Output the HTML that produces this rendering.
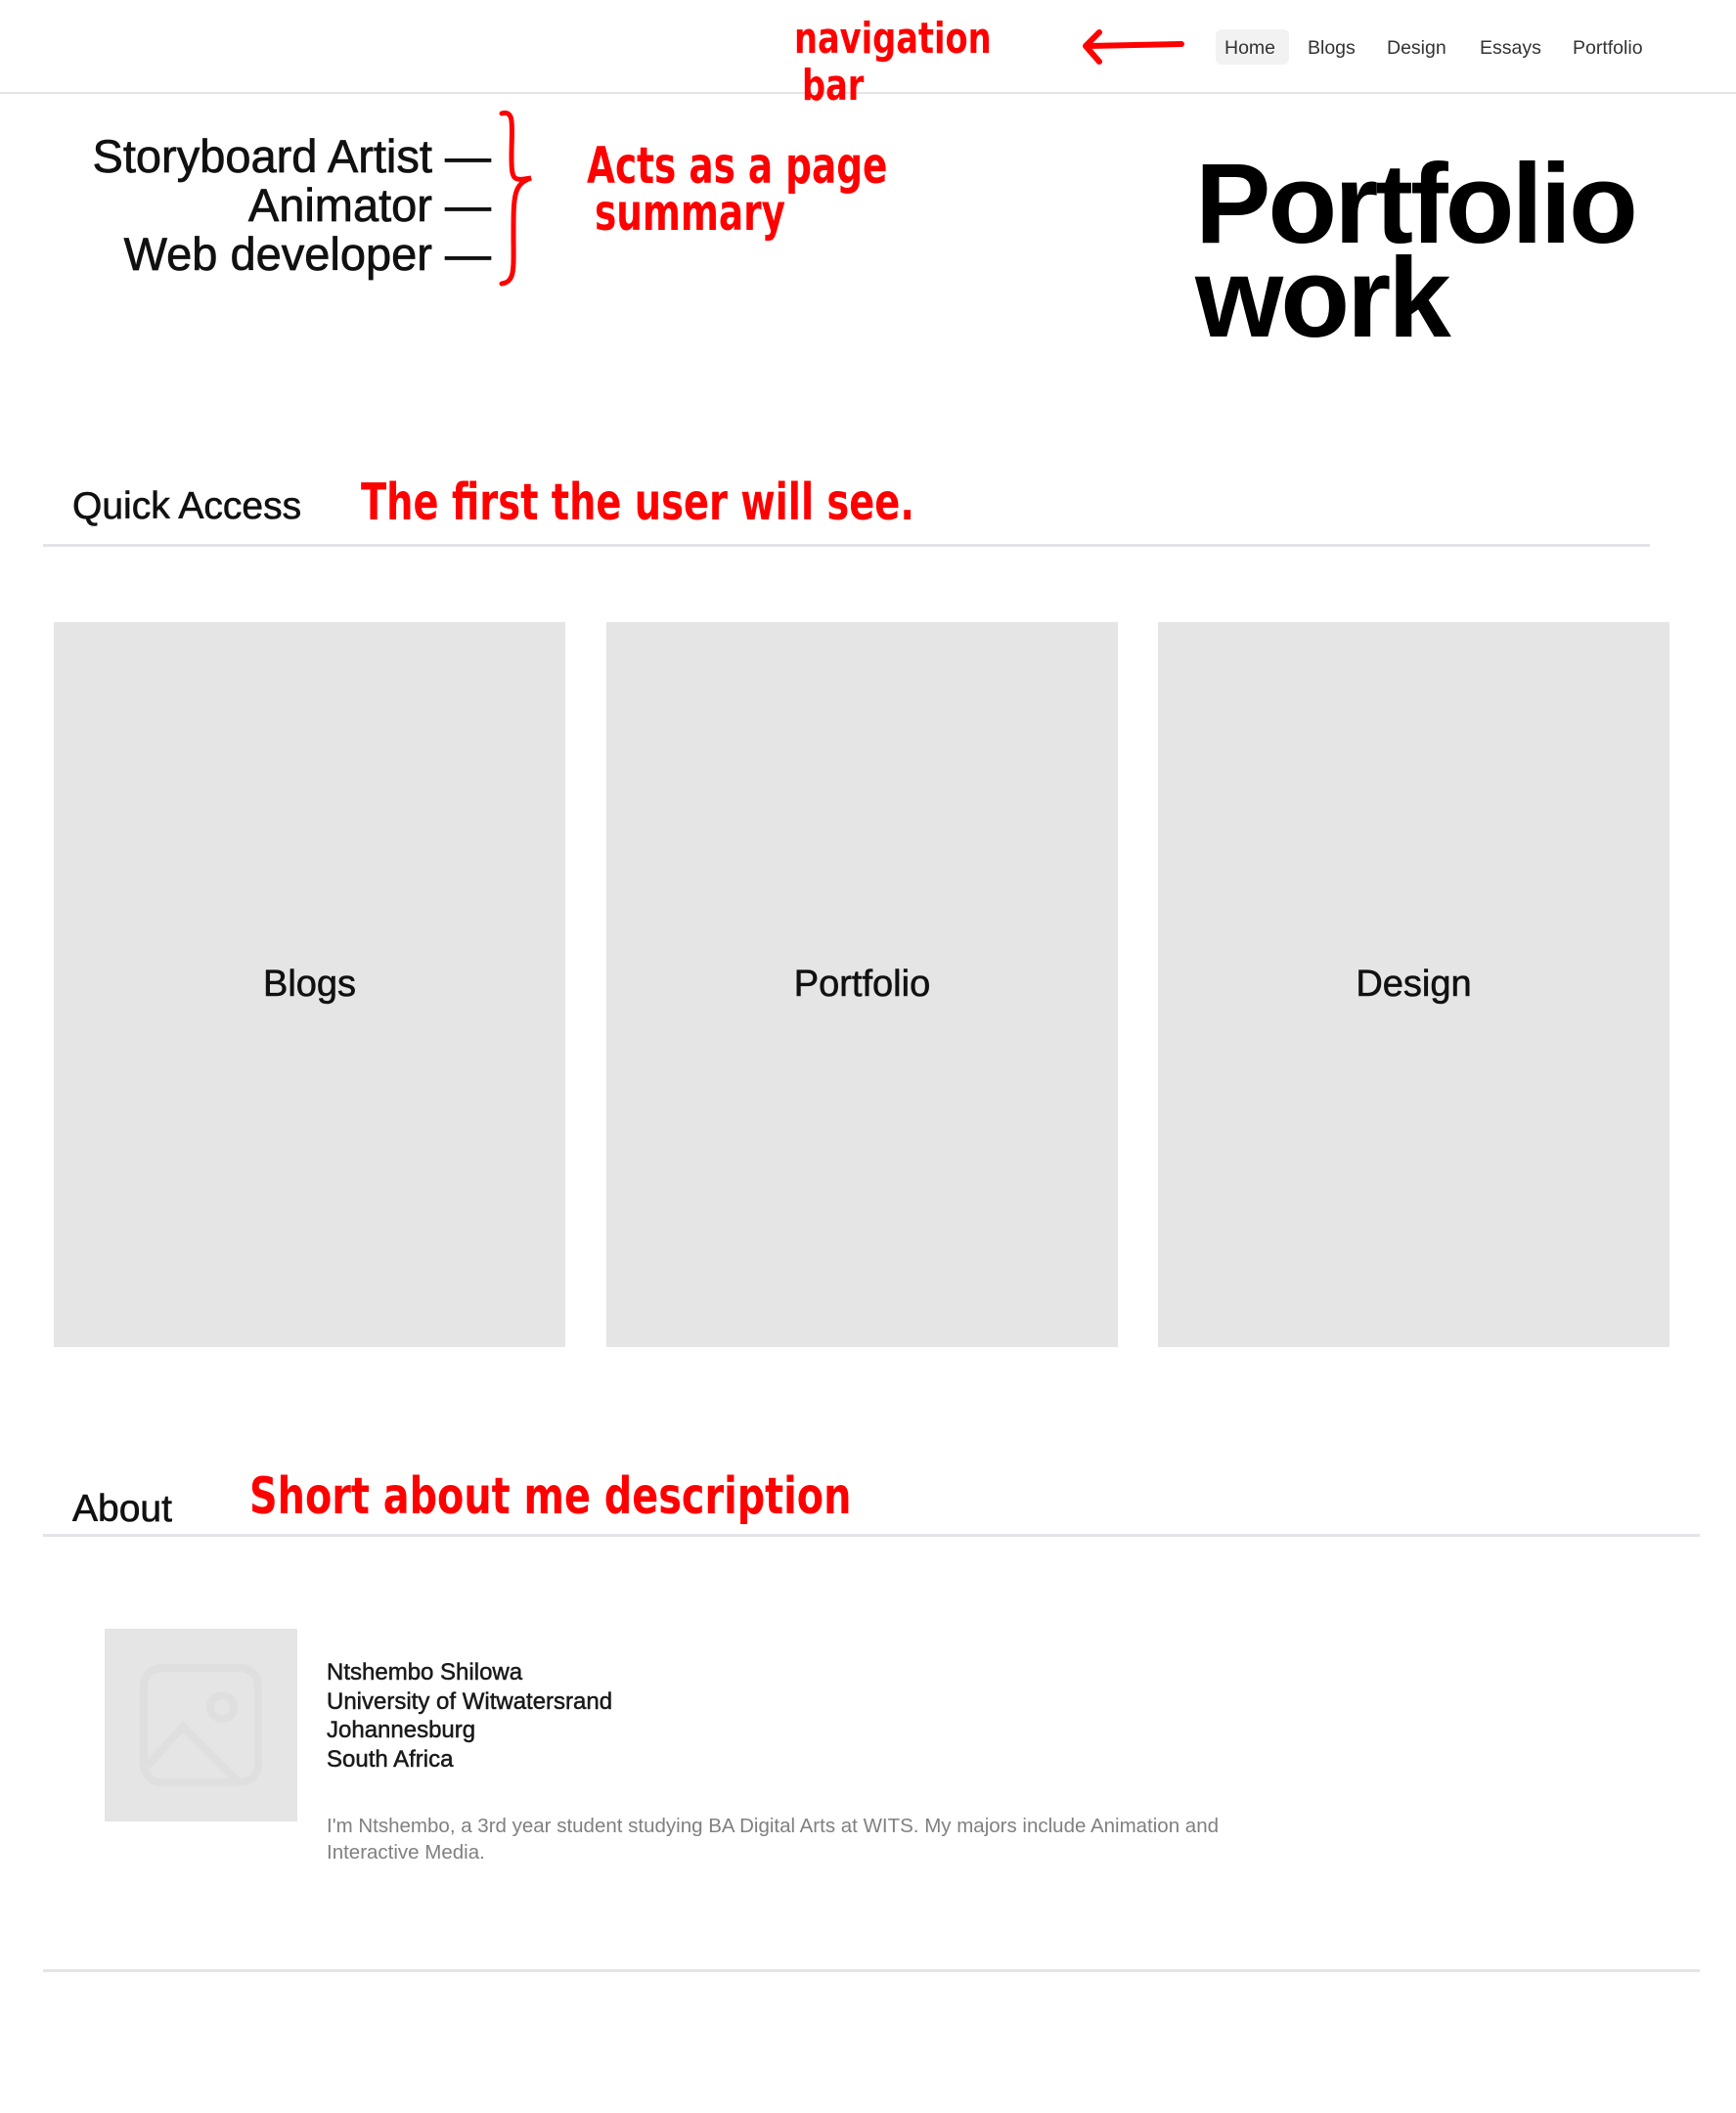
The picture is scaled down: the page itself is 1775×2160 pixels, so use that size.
<!DOCTYPE html>
<html><head><meta charset="utf-8"><style>
body{margin:0;width:1775px;height:2160px;background:#fff;position:relative;overflow:hidden;font-family:"Liberation Sans",sans-serif;color:#111}
.a{position:absolute;white-space:nowrap}
.nav{font-size:19.5px;color:#333;top:38px}
.red{color:#f00;font-family:"DejaVu Sans Condensed","DejaVu Sans",sans-serif;font-weight:bold;transform-origin:left top}
.hr{position:absolute;height:3px;background:#e4e4e8}
.card{position:absolute;top:636px;width:523px;height:741px;background:#e5e5e5;display:flex;align-items:center;justify-content:center;font-size:38px;color:#111;-webkit-text-stroke:0.6px #111}
</style></head><body>
<div class="a" style="left:1243px;top:30px;width:75px;height:36px;background:#f2f2f2;border-radius:6px"></div>
<div class="a nav" style="left:1252px">Home</div>
<div class="a nav" style="left:1337px">Blogs</div>
<div class="a nav" style="left:1418px">Design</div>
<div class="a nav" style="left:1513px">Essays</div>
<div class="a nav" style="left:1608px">Portfolio</div>
<div class="hr" style="left:0;width:1775px;top:94px;height:2px"></div>

<div class="a red" style="left:812px;top:14px;font-size:44px;transform:scaleX(0.85)">navigation</div>
<div class="a red" style="left:820px;top:62px;font-size:44px;transform:scaleX(0.85)">bar</div>
<svg class="a" style="left:1100px;top:25px" width="115" height="45"><path d="M108 20 L12 22 M24 8 L10 22 L24 38" stroke="#f00" stroke-width="6" fill="none" stroke-linecap="round" stroke-linejoin="round"/></svg>

<div class="a" style="left:0;width:502px;top:135px;text-align:right;font-size:47px;line-height:50px;color:#111;-webkit-text-stroke:0.7px #111">Storyboard Artist —<br>Animator —<br>Web developer —</div>
<svg class="a" style="left:505px;top:110px" width="60" height="185"><path d="M8 6 C22 2 18 20 18 50 C18 75 20 75 38 72 C20 78 20 90 20 130 C20 165 22 178 8 180" stroke="#f00" stroke-width="5" fill="none" stroke-linecap="round"/></svg>
<div class="a red" style="left:600px;top:140px;font-size:52px;transform:scaleX(0.8)">Acts as a page</div>
<div class="a red" style="left:608px;top:188px;font-size:52px;transform:scaleX(0.8)">summary</div>

<div class="a" style="left:1222px;top:160px;font-size:116px;line-height:96px;font-weight:bold;letter-spacing:-3px;color:#000">Portfolio<br>work</div>

<div class="a" style="left:74px;top:496px;font-size:39px;color:#111;-webkit-text-stroke:0.6px #111">Quick Access</div>
<div class="a red" style="left:369px;top:484px;font-size:52px;transform:scaleX(0.82)">The first the user will see.</div>
<div class="hr" style="left:44px;width:1643px;top:556px"></div>

<div class="card" style="left:55px">Blogs</div>
<div class="card" style="left:620px">Portfolio</div>
<div class="card" style="left:1184px">Design</div>

<div class="a" style="left:74px;top:1521px;font-size:39px;color:#111;-webkit-text-stroke:0.6px #111">About</div>
<div class="a red" style="left:255px;top:1500px;font-size:52px;transform:scaleX(0.85)">Short about me description</div>
<div class="hr" style="left:44px;width:1694px;top:1568px"></div>

<div class="a" style="left:107px;top:1665px;width:197px;height:197px;background:#e5e5e5"></div>
<svg class="a" style="left:107px;top:1665px" width="197" height="197"><rect x="40" y="40" width="117" height="117" rx="18" fill="none" stroke="#dfdfdf" stroke-width="8"/><circle cx="120" cy="80" r="12" fill="none" stroke="#dfdfdf" stroke-width="8"/><path d="M44 140 L80 100 L135 155" fill="none" stroke="#dfdfdf" stroke-width="8"/></svg>
<div class="a" style="left:334px;top:1695px;font-size:24px;line-height:29.6px;color:#1a1a1a;-webkit-text-stroke:0.5px #1a1a1a">Ntshembo Shilowa<br>University of Witwatersrand<br>Johannesburg<br>South Africa</div>
<div class="a" style="left:334px;top:1853px;font-size:20.5px;line-height:27px;color:#808080">I'm Ntshembo, a 3rd year student studying BA Digital Arts at WITS. My majors include Animation and<br>Interactive Media.</div>
<div class="hr" style="left:44px;width:1694px;top:2013px"></div>
</body></html>
